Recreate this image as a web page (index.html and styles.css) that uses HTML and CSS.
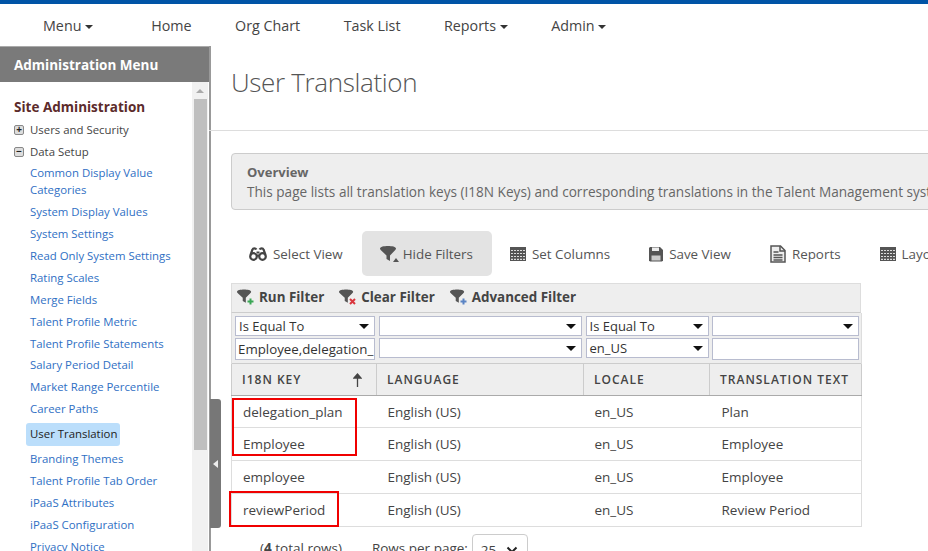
FILE: index.html
```html
<!DOCTYPE html>
<html lang="en">
<head>
    <meta charset="UTF-8">
    <meta name="viewport" content="width=device-width, initial-scale=1.0">
    <title>User Translation</title>
    <link rel="stylesheet" href="styles.css">
</head>
<body>
    <svg class="defs" width="0" height="0">
        <symbol id="funnel" viewBox="0 0 17 16">
            <path d="M0 2.500C0 .8 4 0 8 0s8 .8 8 2.500c0 .8-.6 1.300-1.200 2L10 9.500V15L6.500 13V9.500L1.200 4.500C.6 3.800 0 3.300 0 2.500z"/>
        </symbol>
        <symbol id="grid" viewBox="0 0 16 16">
            <rect y="1" width="16" height="14" fill="#555"/>
            <path d="M1 4.500h14M1 7.500h14M1 10.500h14M1 13.300h14" stroke="#ddd" stroke-width="1.200"/>
            <path d="M3.500 2v13M6.500 2v13M9.500 2v13M12.500 2v13" stroke="#555" stroke-width="1"/>
        </symbol>
    </svg>

    <div class="topbar"></div>
    <nav class="nav">
        <a class="menu-link">Menu <i class="caret"></i></a>
        <a>Home</a>
        <a>Org Chart</a>
        <a>Task List</a>
        <a>Reports <i class="caret"></i></a>
        <a>Admin <i class="caret"></i></a>
    </nav>

    <div class="layout">
        <aside class="sidebar">
            <div class="side-title">Administration Menu</div>
            <div class="side-body">
                <div class="side-list">
                    <h3>Site Administration</h3>
                    <div class="tree"><span class="box">+</span>Users and Security</div>
                    <div class="tree"><span class="box">&minus;</span>Data Setup</div>
                    <ul>
                        <li>Common Display Value Categories</li>
                        <li>System Display Values</li>
                        <li>System Settings</li>
                        <li>Read Only System Settings</li>
                        <li>Rating Scales</li>
                        <li>Merge Fields</li>
                        <li>Talent Profile Metric</li>
                        <li>Talent Profile Statements</li>
                        <li>Salary Period Detail</li>
                        <li>Market Range Percentile</li>
                        <li>Career Paths</li>
                        <li class="current"><span>User Translation</span></li>
                        <li>Branding Themes</li>
                        <li>Talent Profile Tab Order</li>
                        <li>iPaaS Attributes</li>
                        <li>iPaaS Configuration</li>
                        <li>Privacy Notice</li>
                    </ul>
                </div>
                <div class="scrollbar">
                    <div class="arrow"></div>
                    <div class="thumb"></div>
                </div>
            </div>
        </aside>
        <div class="handle"><i></i></div>

        <main class="main">
            <h1>User Translation</h1>
            <div class="overview">
                <strong>Overview</strong>
                <p>This page lists all translation keys (I18N Keys) and corresponding translations in the Talent Management system.</p>
            </div>

            <div class="toolbar">
                <a>
                    <svg width="18" height="16" viewBox="0 0 18 16"><g fill="none" stroke="#444" stroke-width="2.200"><circle cx="4.500" cy="10.500" r="3.300"/><circle cx="13.500" cy="10.500" r="3.300"/><path d="M1.500 9 3.500 3.500C4 2 6.500 2 7.500 3.500M16.500 9l-2-5.500C14 2 11.500 2 10.500 3.500M7.500 9.500h3M7.500 6.500h3"/></g></svg>
                    Select View
                </a>
                <a class="active">
                    <span class="icon-wrap">
                        <svg width="17" height="16"><use href="#funnel"/></svg>
                        <i class="tri"></i>
                    </span>
                    Hide Filters
                </a>
                <a>
                    <svg width="16" height="16"><use href="#grid"/></svg>
                    Set Columns
                </a>
                <a>
                    <svg width="14" height="16" viewBox="0 0 14 16"><path fill="#555" d="M1 1h10l3 3v10.500l-1 1H1l-1-1V2z"/><rect x="3" y="1.500" width="7" height="3.500" fill="#eee"/><rect x="2.500" y="9.500" width="9" height="5" fill="#ccc"/></svg>
                    Save View
                </a>
                <a>
                    <svg width="16" height="18" viewBox="0 0 16 18"><path fill="#eee" stroke="#555" stroke-width="1.500" d="M1 1h9.500L15 5.500V17H1z"/><path fill="none" stroke="#555" stroke-width="1.500" d="M10 1v5h5M3.500 7h5M3.500 10h9M3.500 12.500h9M3.500 15h9"/></svg>
                    Reports
                </a>
                <a>
                    <svg width="16" height="16"><use href="#grid"/></svg>
                    Layout
                </a>
            </div>

            <div class="grid-wrap">
                <div class="filter-bar">
                    <a>
                        <svg width="18" height="16" viewBox="0 0 18 16"><use href="#funnel" width="15" height="15"/><path d="M13.500 9.500v6M10.500 12.500h6" stroke="#3aa655" stroke-width="2"/></svg>
                        Run Filter
                    </a>
                    <a>
                        <svg width="18" height="16" viewBox="0 0 18 16"><use href="#funnel" width="15" height="15"/><path d="M11 10l5 5M16 10l-5 5" stroke="#d9363e" stroke-width="2"/></svg>
                        Clear Filter
                    </a>
                    <a>
                        <svg width="18" height="16" viewBox="0 0 18 16"><use href="#funnel" width="15" height="15"/><path d="M13.500 9.500v6M10.500 12.500h6" stroke="#5b84c4" stroke-width="2"/></svg>
                        Advanced Filter
                    </a>
                </div>
                <table class="grid">
                    <colgroup>
                        <col class="col-key"><col class="col-lang"><col class="col-locale"><col class="col-text">
                    </colgroup>
                    <tr class="filter-row first">
                        <td><div class="fbox sel">Is Equal To</div></td>
                        <td><div class="fbox sel"></div></td>
                        <td><div class="fbox sel">Is Equal To</div></td>
                        <td><div class="fbox sel"></div></td>
                    </tr>
                    <tr class="filter-row second">
                        <td><div class="fbox input">Employee,delegation_</div></td>
                        <td><div class="fbox sel"></div></td>
                        <td><div class="fbox sel">en_US</div></td>
                        <td><div class="fbox input"></div></td>
                    </tr>
                    <tr class="head">
                        <th>I18N KEY
                            <svg class="sort" width="9" height="14" viewBox="0 0 9 14"><path d="M4.500 14V2M1 5l3.500-4L8 5z" stroke="#444" stroke-width="1.300" fill="#444"/></svg>
                        </th>
                        <th>LANGUAGE</th>
                        <th>LOCALE</th>
                        <th>TRANSLATION TEXT</th>
                    </tr>
                    <tr class="top-row"><td>delegation_plan</td><td>English (US)</td><td>en_US</td><td>Plan</td></tr>
                    <tr><td>Employee</td><td>English (US)</td><td>en_US</td><td>Employee</td></tr>
                    <tr><td>employee</td><td>English (US)</td><td>en_US</td><td>Employee</td></tr>
                    <tr><td>reviewPeriod</td><td>English (US)</td><td>en_US</td><td>Review Period</td></tr>
                </table>
            </div>

            <div class="pager">
                <span class="total">(<b>4</b> total rows)</span>
                <span class="per-label">Rows per page:</span>
                <div class="per-page">25 <svg width="12" height="8" viewBox="0 0 12 8"><path d="M1.500 1.500 6 6l4.500-4.500" fill="none" stroke="#222" stroke-width="2"/></svg></div>
            </div>
        </main>
    </div>

    <div class="redbox box-a"></div>
    <div class="redbox box-b"></div>
</body>
</html>
```

FILE: styles.css
```css
body {
    margin: 0;
    width: 928px;
    height: 551px;
    overflow: hidden;
    position: relative;
    background: #fff;
    color: #444;
    font-family: "Open Sans", "Noto Sans", Arial, sans-serif;
    font-size: 12.5px;
}
.defs {
    position: absolute;
}
.topbar {
    height: 4px;
    background: #0054a6;
}
.nav {
    display: flex;
    align-items: center;
    height: 42px;
    padding-left: 43px;
    font-size: 14.3px;
    color: #444;
}
.nav a {
    margin-right: 43.500px;
    white-space: nowrap;
}
.nav .menu-link {
    margin-right: 58px;
}
.caret {
    display: inline-block;
    border-left: 4px solid transparent;
    border-right: 4px solid transparent;
    border-top: 4px solid #333;
    vertical-align: middle;
}
.layout {
    display: flex;
    height: 505px;
}
.sidebar {
    width: 209px;
    flex: none;
    border-right: 2px solid #999;
}
.side-title {
    height: 35px;
    line-height: 36px;
    padding-left: 14px;
    background: #7a7a7a;
    border-top: 1px solid #aaa;
    color: #fff;
    font-size: 13.5px;
    font-weight: 700;
}
.side-body {
    display: flex;
    height: 469px;
    overflow: hidden;
}
.side-list {
    width: 192px;
    flex: none;
    padding: 16px 0 0 14px;
    box-sizing: border-box;
}
.side-list h3 {
    margin: 0 0 3px;
    font-size: 13.5px;
    line-height: 18px;
    color: #5c2b2b;
}
.tree {
    height: 22px;
    line-height: 22px;
    font-size: 11.4px;
    white-space: nowrap;
}
.box {
    display: inline-block;
    width: 8px;
    height: 8px;
    margin-right: 6px;
    line-height: 7px;
    text-align: center;
    font-size: 10px;
    font-weight: 700;
    color: #222;
    background: #ddd;
    border: 1px solid #888;
    border-radius: 2px;
    vertical-align: 1px;
}
.side-list ul {
    list-style: none;
    margin: -1px 0 0;
    padding: 0 0 0 16px;
    color: #2f6fc4;
    font-size: 11.4px;
}
.side-list li {
    line-height: 17px;
    padding: 2.450px 0;
}
.side-list .current {
    margin: 3px 0 2px -4px;
    padding: 0;
}
.current span {
    display: inline-block;
    padding: 2px 3px 3px 4px;
    line-height: 18px;
    background: #bbdefb;
    border-radius: 3px;
    color: #222;
}
.scrollbar {
    width: 16px;
    background: #f1f1f1;
}
.arrow {
    width: 0;
    margin: 7px auto 0;
    border-left: 4px solid transparent;
    border-right: 4px solid transparent;
    border-bottom: 4px solid #aaa;
}
.thumb {
    width: 13px;
    height: 351px;
    margin: 6px 0 0 2px;
    background: #bfbfbf;
}
.handle {
    position: absolute;
    left: 210px;
    top: 399px;
    width: 11px;
    height: 129px;
    background: #777;
    border-radius: 0 3px 3px 0;
    display: flex;
    align-items: center;
    justify-content: center;
}
.handle i {
    border-top: 4px solid transparent;
    border-bottom: 4px solid transparent;
    border-right: 5px solid #eee;
}
.main {
    flex: none;
    width: 719px;
    margin-left: -2px;
    padding-left: 22px;
    box-sizing: border-box;
    overflow: hidden;
}
.main h1 {
    height: 85px;
    width: 900px;
    margin: 0 0 0 -22px;
    padding: 18px 0 0 22px;
    box-sizing: border-box;
    border-bottom: 1px solid #ddd;
    font-size: 26px;
    line-height: 36px;
    letter-spacing: -0.35px;
    font-weight: 300;
    color: #555;
}
.overview {
    width: 900px;
    height: 57px;
    margin-top: 22px;
    padding: 8px 15px;
    box-sizing: border-box;
    background: #eee;
    border: 1px solid #ccc;
    border-radius: 4px;
    line-height: 20px;
    color: #666;
    font-size: 13.6px;
}
.overview strong {
    font-size: 13px;
}
.overview p {
    margin: 0;
    white-space: nowrap;
}
.toolbar {
    display: flex;
    width: 900px;
    height: 45px;
    margin-top: 21px;
    font-size: 13.4px;
    color: #555;
}
.toolbar a {
    display: flex;
    align-items: center;
    gap: 6px;
    height: 45px;
    padding: 0 19px 0 18px;
    white-space: nowrap;
    border-radius: 5px;
}
.toolbar a:nth-child(n+3) {
    padding-right: 20px;
}
.toolbar a:nth-child(n+4) {
    padding-left: 19px;
}
.toolbar a.active {
    background: #e3e3e3;
}
.toolbar svg {
    fill: #555;
    flex: none;
}
.icon-wrap {
    position: relative;
    display: flex;
}
.tri {
    position: absolute;
    right: -2px;
    bottom: 0;
    border-left: 3px solid transparent;
    border-right: 3px solid transparent;
    border-bottom: 4px solid #555;
}
.grid-wrap {
    width: 630px;
    margin-top: 7px;
}
.filter-bar {
    display: flex;
    gap: 15px;
    align-items: center;
    height: 30px;
    padding: 0 0 2px 5px;
    background: #eee;
    border: 1px solid #ddd;
    border-bottom-color: #ccc;
    box-sizing: border-box;
    font-size: 13.400px;
    font-weight: 700;
}
.filter-bar a {
    display: flex;
    align-items: center;
    gap: 4px;
}
.filter-bar svg {
    fill: #555;
}
.grid {
    width: 630px;
    table-layout: fixed;
    border-collapse: collapse;
}
.col-key {
    width: 145px;
}
.col-lang {
    width: 207px;
}
.col-locale {
    width: 126px;
}
.col-text {
    width: 152px;
}
.grid td {
    height: 32px;
    padding: 0 0 0 11px;
    border-bottom: 1px solid #ddd;
    font-size: 13.500px;
    color: #444;
}
.grid td:last-child {
    padding-left: 12px;
}
.grid .top-row td {
    height: 31px;
}
.grid tr td:first-child {
    border-left: 1px solid #ddd;
}
.grid tr td:last-child {
    border-right: 1px solid #ddd;
}
.grid .filter-row td {
    vertical-align: top;
    padding: 2px 2px 0;
    background: #eee;
    border: none;
}
.grid .filter-row td:first-child {
    padding-left: 3px;
}
.grid .filter-row td:nth-child(3) {
    padding-right: 1px;
}
.grid .first td {
    height: 20px;
    padding-top: 3px;
}
.grid .second td {
    height: 25px;
}
.fbox {
    position: relative;
    height: 20px;
    line-height: 18px;
    padding-left: 3px;
    box-sizing: border-box;
    background: #fff;
    border: 1px solid #b8bccf;
    font-size: 13px;
    color: #333;
    white-space: nowrap;
    overflow: hidden;
}
.fbox.input {
    height: 22px;
    line-height: 20px;
    padding-left: 2px;
    font-size: 13.300px;
}
.fbox.sel::after {
    content: "";
    position: absolute;
    right: 5px;
    top: 7px;
    border-left: 5px solid transparent;
    border-right: 5px solid transparent;
    border-top: 5px solid #111;
}
.grid .head th {
    height: 31px;
    padding: 0 0 0 10px;
    text-align: left;
    background: #eee;
    border-top: 1px solid #ccc;
    border-left: 1px solid #ccc;
    border-bottom: 1px solid #aaa;
    font-size: 12px;
    font-weight: 600;
    letter-spacing: 1px;
    color: #444;
    position: relative;
}
.grid .head th:last-child {
    border-right: 1px solid #ccc;
}
.sort {
    position: absolute;
    right: 14px;
    top: 9px;
}
.pager {
    display: flex;
    align-items: flex-start;
    height: 30px;
    margin-top: 7px;
    padding-left: 29px;
    font-size: 13.500px;
}
.total {
    margin-right: 30px;
    padding-top: 5px;
}
.per-label {
    padding-top: 5px;
}
.per-page {
    display: flex;
    align-items: center;
    gap: 10px;
    width: 56px;
    height: 32px;
    margin-left: 4px;
    padding-left: 8px;
    box-sizing: border-box;
    border: 1px solid #ccc;
    border-radius: 4px;
}
.redbox {
    position: absolute;
    border: 2px solid #f00000;
    box-sizing: border-box;
}
.box-a {
    left: 232px;
    top: 398px;
    width: 125px;
    height: 58px;
}
.box-b {
    left: 229px;
    top: 491px;
    width: 110px;
    height: 36px;
}
```
